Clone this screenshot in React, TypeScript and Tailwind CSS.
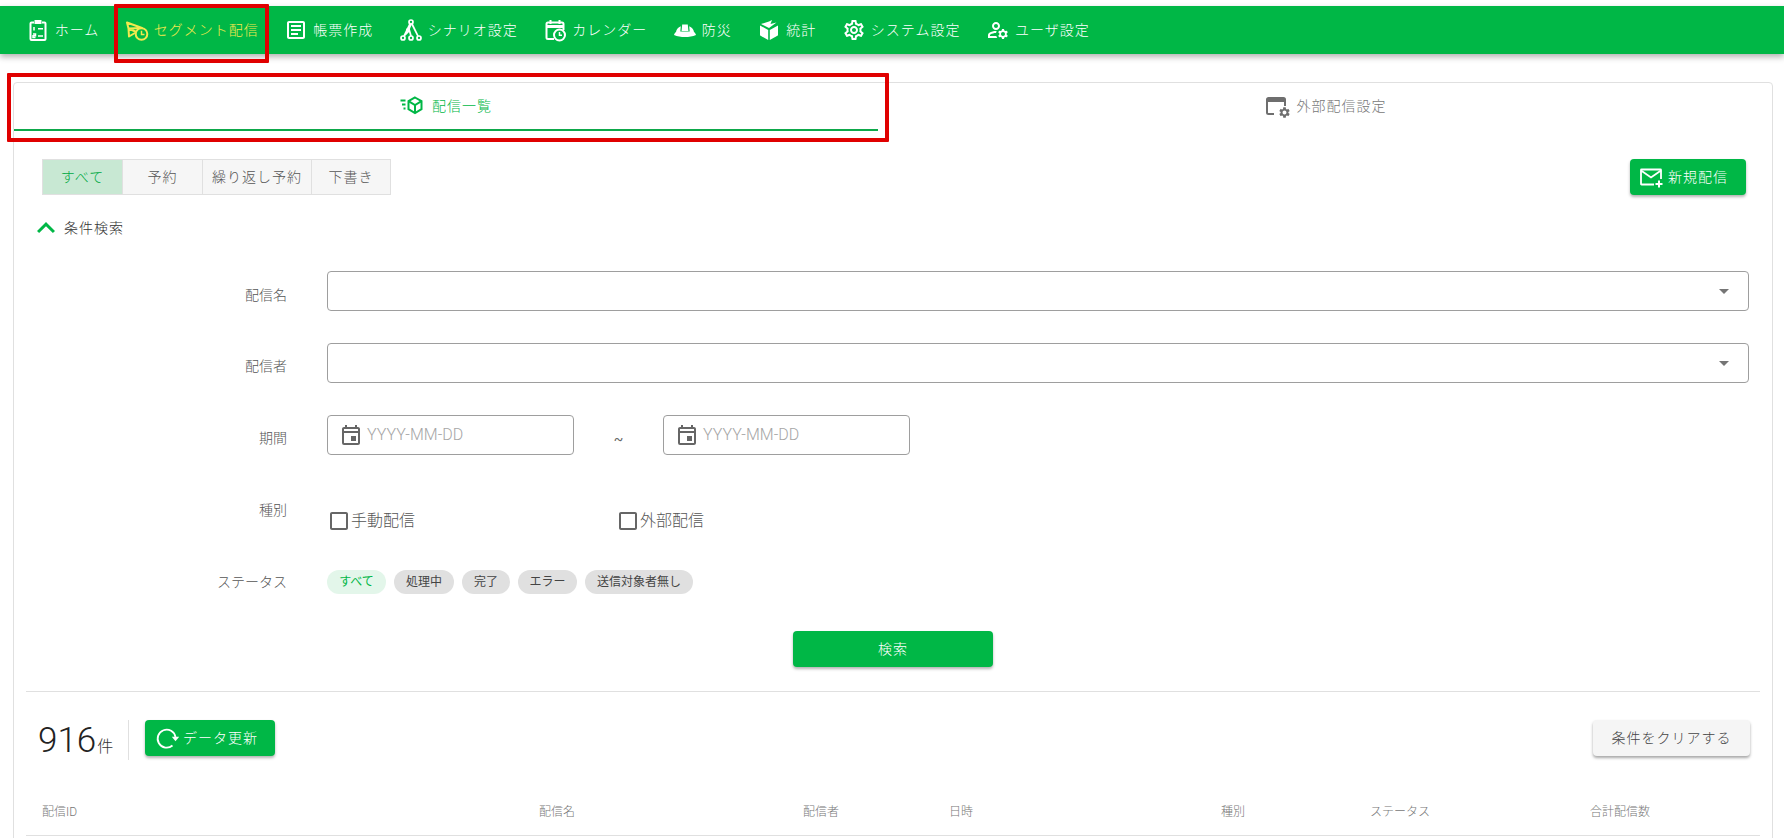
import React from "react";
import {
  MdOutlineArticle,
  MdOutlineSettings,
  MdOutlineManageAccounts,
  MdOutlineEvent,
  MdCheckBoxOutlineBlank,
  MdExpandLess,
  MdArrowDropDown,
  MdSettings,
} from "react-icons/md";

const font = "[font-family:Roboto,'Noto_Sans_CJK_JP',sans-serif]";

function HomeIcon() {
  return (
    <svg viewBox="0 0 24 24" className="w-[24px] h-[24px]" fill="none" stroke="currentColor" strokeWidth="2">
      <path d="M8 4.500H5.500a1 1 0 0 0-1 1V21a1 1 0 0 0 1 1h13a1 1 0 0 0 1-1V5.500a1 1 0 0 0-1-1H16" />
      <rect x="8.500" y="2" width="7" height="4" fill="currentColor" stroke="none" />
      <path d="M8 9v3.500M7 16h2.500v1.800H7v1.800h2.500M12 10.800h5M12 18h5" strokeWidth="1.500" />
    </svg>
  );
}
function SegmentIcon() {
  return (
    <svg viewBox="0 0 24 24" className="w-[24px] h-[24px]" fill="none" stroke="currentColor" strokeWidth="2">
      <path d="M2 4.500l15 5.500-13.500.5 8 3.500L4 18.500l-.5-8z" strokeLinejoin="round" />
      <circle cx="16.500" cy="16" r="5.800" fill="#00b746" strokeWidth="2" />
      <path d="M16.500 12.800v3.600h3" strokeWidth="1.500" />
    </svg>
  );
}
function TreeIcon() {
  return (
    <svg viewBox="0 0 24 24" className="w-[24px] h-[24px]" fill="none" stroke="currentColor" strokeWidth="1.700">
      <circle cx="12" cy="4" r="2" />
      <circle cx="4" cy="20" r="2" />
      <circle cx="12" cy="20" r="2" />
      <circle cx="20" cy="20" r="2" />
      <circle cx="9" cy="12" r="1.200" fill="currentColor" />
      <path d="M11 6l-6 12.200M12 6l-2 5 2 7M13 6l6 12.200M10 13l-5 5" />
    </svg>
  );
}
function CalClockIcon() {
  return (
    <svg viewBox="0 0 24 24" className="w-[24px] h-[24px]" fill="none" stroke="currentColor" strokeWidth="2">
      <path d="M11 21H5a1.500 1.500 0 0 1-1.500-1.500V6A1.500 1.500 0 0 1 5 4.500h14A1.500 1.500 0 0 1 20.500 6v6" />
      <path d="M3.500 8.500h17" strokeWidth="3" />
      <path d="M7.500 2v4M16.500 2v4" />
      <circle cx="16.500" cy="17" r="5.500" />
      <path d="M16.500 14v3.200h2.500" strokeWidth="1.500" />
    </svg>
  );
}
function HatIcon() {
  return (
    <svg viewBox="0 0 24 24" className="w-[24px] h-[24px]" fill="currentColor">
      <path d="M9.200 6.500h5.600l.6 6.500H8.600z" />
      <path d="M7.800 8.200L7.300 13.500h9.400l-.5-5.300c2.700 1 4.300 3 4.800 5.800.9.500 1.600 1.500 2 3-3.300 1.400-7 2-11 2s-7.700-.6-11-2c.4-1.500 1.100-2.500 2-3 .5-2.800 2.100-4.800 4.800-5.800z" />
    </svg>
  );
}
function BoxIcon() {
  return (
    <svg viewBox="0 0 24 24" className="w-[24px] h-[24px]" fill="currentColor">
      <path d="M3 7.500l8.200 4.400V22L3.600 17.800A1 1 0 0 1 3 17z" />
      <path d="M21 7.500l-8.200 4.400V22l7.600-4.200a1 1 0 0 0 .6-.8z" />
      <path d="M12 3.500l3-1.500-1.500 4 6-1.500L12 10 4 6z" />
    </svg>
  );
}
function PackageFastIcon() {
  return (
    <svg viewBox="0 0 24 24" className="w-[24px] h-[24px]" fill="none" stroke="currentColor" strokeWidth="2">
      <path d="M15 3.500l6.500 3.700v8l-6.500 3.800-6.500-3.800v-8z" />
      <path d="M8.500 7.200l6.500 3.800 6.500-3.800M15 11v8" />
      <path d="M0.500 6.500h5M2 10.500h3.500M3.500 14.500h2" />
    </svg>
  );
}
function WindowGearIcon() {
  return (
    <span className="relative block w-[24px] h-[24px]">
      <svg viewBox="0 0 24 24" className="w-[24px] h-[24px]" fill="none" stroke="currentColor" strokeWidth="2">
        <path d="M10 20H4.500A1.500 1.500 0 0 1 3 18.500v-13A1.500 1.500 0 0 1 4.500 4h15A1.500 1.500 0 0 1 21 5.500V12" />
        <path d="M3 6.500h18" strokeWidth="3" />
      </svg>
      <MdSettings className="absolute right-[-3px] bottom-[-1px] w-[13px] h-[13px]" />
    </span>
  );
}
function MailPlusIcon() {
  return (
    <svg viewBox="0 0 24 24" className="w-[24px] h-[24px]" fill="none" stroke="currentColor" strokeWidth="1.800">
      <path d="M15 19.500H2.500a.5.5 0 0 1-.5-.5V5a.5.5 0 0 1 .5-.5h19a.5.5 0 0 1 .5.500v9" />
      <path d="M2 5.500l10 7 10-7" />
      <path d="M20 15.500v7M16.500 19h7" strokeWidth="2" />
    </svg>
  );
}
function RefreshIcon() {
  return (
    <svg viewBox="0 0 24 24" className="w-[24px] h-[24px]" fill="none" stroke="currentColor" strokeWidth="1.800">
      <path d="M17.500 19.500A9 9 0 1 1 20.500 11" />
      <path d="M16.800 10.800h7.400l-3.700 4.400z" fill="currentColor" stroke="none" />
    </svg>
  );
}

const nav: { label: string; icon: React.ReactNode; active?: boolean }[] = [
  { label: "ホーム", icon: <HomeIcon /> },
  { label: "セグメント配信", icon: <SegmentIcon />, active: true },
  { label: "帳票作成", icon: <MdOutlineArticle className="w-[24px] h-[24px]" /> },
  { label: "シナリオ設定", icon: <TreeIcon /> },
  { label: "カレンダー", icon: <CalClockIcon /> },
  { label: "防災", icon: <HatIcon /> },
  { label: "統計", icon: <BoxIcon /> },
  { label: "システム設定", icon: <MdOutlineSettings className="w-[24px] h-[24px]" /> },
  { label: "ユーザ設定", icon: <MdOutlineManageAccounts className="w-[24px] h-[24px]" /> },
];

function Label({ children, extra = "" }: { children: React.ReactNode; extra?: string }) {
  return (
    <div className={`w-[273px] mr-[40px] shrink-0 text-right text-[14px] leading-[20px] font-light text-[#555] ${extra}`}>
      {children}
    </div>
  );
}

function SelectBox() {
  return (
    <div className="flex-1 h-[40px] rounded-[4px] border border-[#9e9e9e] bg-white flex items-center justify-end pr-[12px] text-[#757575]">
      <MdArrowDropDown className="w-[24px] h-[24px]" />
    </div>
  );
}

function DateBox() {
  return (
    <div className="w-[247px] h-[40px] rounded-[4px] border border-[#9e9e9e] flex items-center pl-[11px] gap-[4px]">
      <MdOutlineEvent className="w-[24px] h-[24px] text-[#666]" />
      <span className="text-[16px] leading-[20px] text-[#a6a6a6] font-light">YYYY-MM-DD</span>
    </div>
  );
}

function Check({ label, width }: { label: string; width: string }) {
  return (
    <div className={`flex items-center ${width}`}>
      <MdCheckBoxOutlineBlank className="w-[24px] h-[24px] text-[#666]" />
      <span className="text-[16px] leading-[20px] font-light text-[#555]">{label}</span>
    </div>
  );
}

function Chip({ label, w, active }: { label: string; w: string; active?: boolean }) {
  return (
    <div
      className={`h-[24px] rounded-full flex items-center justify-center text-[12px] ${w} ${
        active ? "bg-[#e3f6ea] text-[#00b746]" : "bg-[#e0e0e0] text-[#444]"
      }`}
    >
      {label}
    </div>
  );
}

const segs = [
  { t: "すべて", w: "w-[79px]", a: true },
  { t: "予約", w: "w-[80px]" },
  { t: "繰り返し予約", w: "w-[109px]" },
  { t: "下書き", w: "w-[79px]" },
];

const cols = [
  { t: "配信ID", w: "w-[497px]" },
  { t: "配信名", w: "w-[264px]" },
  { t: "配信者", w: "w-[146px]" },
  { t: "日時", w: "w-[272px]" },
  { t: "種別", w: "w-[149px]" },
  { t: "ステータス", w: "w-[220px]" },
  { t: "合計配信数", w: "w-[100px]" },
];

export default function App() {
  return (
    <div className={`relative w-[1784px] h-[838px] overflow-hidden bg-white pt-[6px] ${font}`}>
      <header className="relative z-10 h-[48px] bg-[#00b746] flex items-center pl-[13px] shadow-[0_3px_6px_rgba(0,0,0,0.3)] text-white">
        {nav.map((n) => (
          <div
            key={n.label}
            className={`flex items-center gap-[5px] px-[12.750px] text-[14px] tracking-[1px] font-light whitespace-nowrap ${
              n.active ? "text-[#f2e94e]" : "text-white"
            }`}
          >
            {n.icon}
            <span>{n.label}</span>
          </div>
        ))}
      </header>

      <main className="ml-[13px] mr-[11px] mt-[28px] h-[800px] border border-[#e0e0e0] rounded-t-[4px] flex flex-col">
        <div className="flex h-[48px]">
          <div className="w-[864px] h-[48px] border-b-2 border-[#0da84a] flex items-center justify-center gap-[4px] text-[14px] tracking-[1px] font-light text-[#00b746]">
            <PackageFastIcon />
            <span className="ml-[4px]">配信一覧</span>
          </div>
          <div className="flex-1 h-[48px] flex items-center justify-center gap-[9px] text-[14px] tracking-[1px] font-light text-[#777] pb-[2px]">
            <span className="text-[#6e6e6e]">
              <WindowGearIcon />
            </span>
            <span>外部配信設定</span>
          </div>
        </div>

        <div className="flex items-center justify-between pl-[28px] pr-[26px] mt-[28px]">
          <div className="flex border border-[#e0e0e0] h-[36px] w-[349px]">
            {segs.map((s, i) => (
              <div
                key={s.t}
                className={`${s.w} flex items-center justify-center text-[14px] tracking-[1px] font-light ${
                  i > 0 ? "border-l border-[#e0e0e0]" : ""
                } ${s.a ? "bg-[#c8e8d3] text-[#00a843]" : "bg-[#f6f6f6] text-[#555]"}`}
              >
                {s.t}
              </div>
            ))}
          </div>
          <div className="w-[116px] h-[36px] rounded-[4px] bg-[#00b746] text-white flex items-center justify-start pl-[9px] gap-[5px] text-[14px] tracking-[1px] font-light shadow-[0_2px_3px_rgba(0,0,0,0.3)]">
            <MailPlusIcon />
            <span>新規配信</span>
          </div>
        </div>

        <div className="flex items-center h-[36px] mt-[15px] ml-[14px] text-[14px] tracking-[1px] font-light text-[#333]">
          <MdExpandLess className="w-[36px] h-[36px] text-[#00b746]" />
          <span>条件検索</span>
        </div>

        <div className="flex items-center h-[40px] mt-[25px] pr-[23px]">
          <Label extra="pt-[8px]">配信名</Label>
          <SelectBox />
        </div>
        <div className="flex items-center h-[40px] mt-[32px] pr-[23px]">
          <Label extra="pt-[6px]">配信者</Label>
          <SelectBox />
        </div>
        <div className="flex items-center h-[40px] mt-[32px] pr-[23px]">
          <Label extra="pt-[6px]">期間</Label>
          <DateBox />
          <span className="w-[89px] text-center text-[14px] text-[#666] pt-[8px]">~</span>
          <DateBox />
        </div>
        <div className="flex items-start h-[40px] mt-[46px]">
          <Label extra="-mt-[1px]">種別</Label>
          <div className="flex pt-[8px]">
            <Check label="手動配信" width="w-[289px]" />
            <Check label="外部配信" width="w-[200px]" />
          </div>
        </div>
        <div className="flex items-center h-[24px] mt-[29px]">
          <Label>ステータス</Label>
          <div className="flex gap-[8px]">
            <Chip label="すべて" w="w-[59px]" active />
            <Chip label="処理中" w="w-[60px]" />
            <Chip label="完了" w="w-[48px]" />
            <Chip label="エラー" w="w-[59px]" />
            <Chip label="送信対象者無し" w="w-[108px]" />
          </div>
        </div>

        <div className="flex justify-center mt-[37px]">
          <div className="w-[200px] h-[36px] rounded-[4px] bg-[#00b746] text-white flex items-center justify-center text-[14px] tracking-[1px] font-light shadow-[0_2px_3px_rgba(0,0,0,0.3)]">
            検索
          </div>
        </div>

        <div className="mx-[12px] mt-[24px] border-t border-[#e0e0e0]" />

        <div className="flex items-center justify-between mt-[28px] ml-[24px] mr-[22px] h-[40px]">
          <div className="flex items-center h-[40px]">
            <div className="flex items-baseline w-[90px] pt-[2px] text-[#222]">
              <span className="text-[35px] leading-[40px] font-light">916</span>
              <span className="ml-[1px] text-[16px] leading-[20px] font-light text-[#333]">件</span>
            </div>
            <div className="w-px h-[40px] bg-[#e0e0e0]" />
            <div className="ml-[16px] -mt-[4px] w-[130px] h-[36px] rounded-[4px] bg-[#00b746] text-white flex items-center justify-start pl-[10px] gap-[4px] text-[14px] tracking-[1px] font-light shadow-[0_2px_3px_rgba(0,0,0,0.3)]">
              <RefreshIcon />
              <span>データ更新</span>
            </div>
          </div>
          <div className="-mt-[4px] w-[157px] h-[36px] rounded-[4px] bg-[#f5f5f5] text-[#444] flex items-center justify-center text-[14px] tracking-[1px] font-light shadow-[0_2px_3px_rgba(0,0,0,0.35)]">
            条件をクリアする
          </div>
        </div>

        <div className="mx-[12px] mt-[33px] border-b border-[#e0e0e0] h-[43px] flex items-start pl-[16px] pt-[9px]">
          {cols.map((c) => (
            <div key={c.t} className={`${c.w} text-[12px] leading-[20px] font-light text-[#777]`}>
              {c.t}
            </div>
          ))}
        </div>
      </main>

      <div className="absolute z-20 left-[114px] top-[4px] w-[155px] h-[59px] border-4 border-[#e00000] rounded-[1px]" />
      <div className="absolute z-20 left-[7px] top-[73px] w-[882px] h-[69px] border-4 border-[#e00000] rounded-[1px]" />
    </div>
  );
}
